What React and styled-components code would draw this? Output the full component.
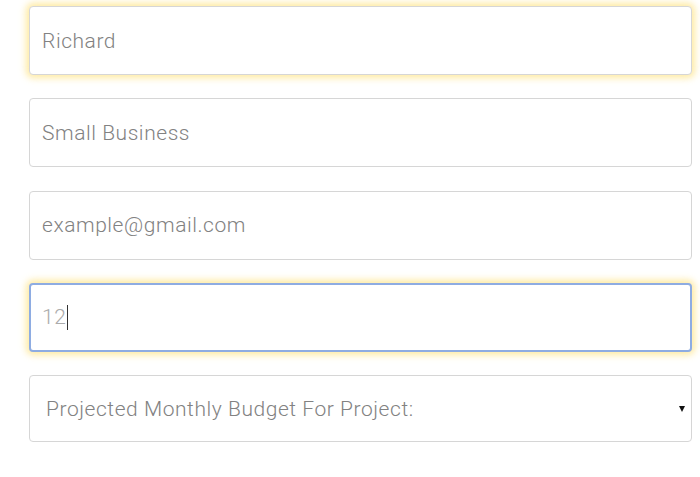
import React from 'react'
import styled, { createGlobalStyle, css } from 'styled-components'

const GlobalStyle = createGlobalStyle`
  html, body {
    margin: 0;
    padding: 0;
    background: #ffffff;
  }
  body {
    font-family: Roboto, "Open Sans", Arial, sans-serif;
  }
`

const Form = styled.form`
  display: flex;
  flex-direction: column;
  gap: 23.3px;
  width: 663px;
  padding: 6px 0 0 29px;
`

const Field = styled.div`
  position: relative;
`

const controlText = css`
  font-family: "Roboto Light", Roboto, sans-serif;
  font-weight: 200;
  font-size: 21px;
  letter-spacing: 0.55px;
`

const Input = styled.input`
  box-sizing: border-box;
  display: block;
  width: 100%;
  height: 69px;
  padding: 0 12px;
  border: 1px solid #d6d6d6;
  border-radius: 4px;
  background: #fff;
  ${controlText}
  color: ${({ $light }) => ($light ? '#ababab' : '#828282')};
  outline: none;
  ${({ $glow }) => $glow && css`
    box-shadow: 0 0 7px 3px rgba(253, 220, 100, 0.6);
  `}
  ${({ $focused }) => $focused && css`
    border: 2px solid #8eace2;
    padding: 0 11px;
  `}
`

const Caret = styled.span`
  position: absolute;
  left: 38px;
  top: 22px;
  width: 1px;
  height: 25px;
  background: #333;
`

const Select = styled.select`
  box-sizing: border-box;
  display: block;
  width: 100%;
  height: 67px;
  padding: 0 12px 0 16px;
  border: 1px solid #d6d6d6;
  border-radius: 4px;
  background: #fff;
  ${controlText}
  color: #828282;
  outline: none;
  appearance: none;
  -webkit-appearance: none;
`

const Arrow = styled.span`
  position: absolute;
  right: 7px;
  top: 50%;
  transform: translateY(-50%);
  width: 0;
  height: 0;
  border-left: 3.5px solid transparent;
  border-right: 3.5px solid transparent;
  border-top: 6px solid #111;
  pointer-events: none;
`

export default function App() {
  return (
    <>
      <GlobalStyle />
      <Form onSubmit={(e) => e.preventDefault()}>
        <Field>
          <Input $glow defaultValue="Richard" />
        </Field>
        <Field>
          <Input defaultValue="Small Business" />
        </Field>
        <Field>
          <Input defaultValue="example@gmail.com" />
        </Field>
        <Field>
          <Input $glow $focused $light defaultValue="12" />
          <Caret />
        </Field>
        <Field>
          <Select defaultValue="">
            <option value="">Projected Monthly Budget For Project:</option>
            <option value="1">$500 - $1,000</option>
            <option value="2">$1,000 - $5,000</option>
          </Select>
          <Arrow />
        </Field>
      </Form>
    </>
  )
}
